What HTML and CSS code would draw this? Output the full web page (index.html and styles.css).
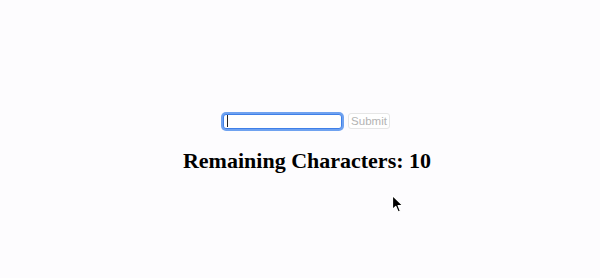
FILE: index.html
```html
<!DOCTYPE html>
<html>
<head>
<meta charset="utf-8">
<link rel="stylesheet" href="styles.css">
</head>
<body>
<main class="page">
  <form class="form">
    <div class="field"><span class="caret"></span></div>
    <button type="button" class="submit">Submit</button>
  </form>
  <h1 class="count">Remaining Characters: 10</h1>
</main>
<svg class="pointer" width="14" height="20" viewBox="0 0 14 20">
  <path d="M1.5 1.5 L1.5 15.5 L4.8 12.4 L7.2 18 L9.4 17 L7.1 11.6 L11.8 11.6 Z" fill="#000" stroke="#fff" stroke-width="1.2" stroke-linejoin="round"/>
</svg>
</body>
</html>
```
FILE: styles.css
```css
html, body {
  margin: 0;
  background: #fdfcfe;
}
.page {
  width: 600px;
  height: 278px;
  padding-top: 113px;
  box-sizing: border-box;
  font-family: "Liberation Serif", serif;
}
.form {
  display: flex;
  justify-content: center;
  align-items: center;
  gap: 6px;
  margin: 0 0 0 13px;
}
.field {
  width: 114px;
  height: 13px;
  border: 1px solid #3f80e8;
  border-radius: 3px;
  box-shadow: 0 0 0 2px #6fa2f0;
  background: #fff;
  display: flex;
  align-items: center;
  padding-left: 3px;
  box-sizing: content-box;
}
.caret {
  width: 1px;
  height: 12px;
  background: #222;
}
.submit {
  width: 42px;
  height: 16px;
  padding: 0;
  border: 1px solid #e6e6e6;
  border-radius: 3px;
  background: #fff;
  color: #b3b3b3;
  font-family: "Liberation Sans", Arial, sans-serif;
  font-size: 11.5px;
  line-height: 14px;
}
.count {
  margin: 17px 0 0;
  text-align: center;
  font-size: 22px;
  font-weight: bold;
  line-height: 29px;
  color: #000;
  padding-left: 14px;
}
.pointer {
  position: absolute;
  left: 391px;
  top: 194px;
}
```
